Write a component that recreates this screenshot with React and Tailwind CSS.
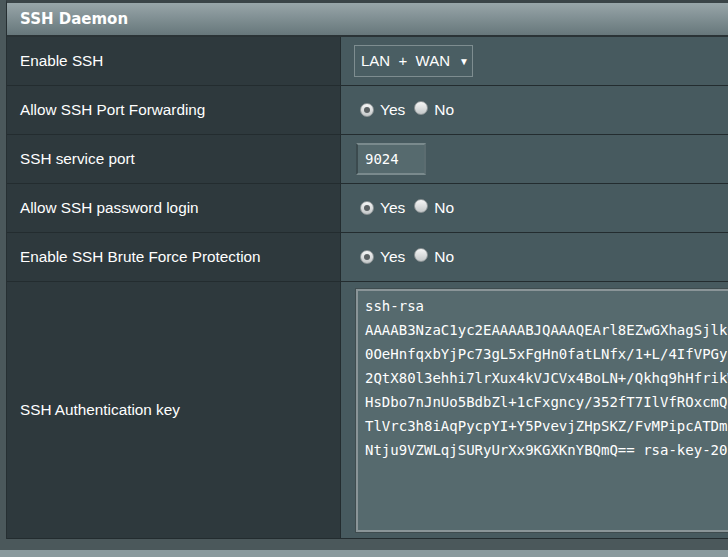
import React from "react"

const keyLines = [
  "ssh-rsa",
  "AAAAB3NzaC1yc2EAAAABJQAAAQEArl8EZwGXhagSjlkQ",
  "0OeHnfqxbYjPc73gL5xFgHn0fatLNfx/1+L/4IfVPGyP",
  "2QtX80l3ehhi7lrXux4kVJCVx4BoLN+/Qkhq9hHfrikW",
  "HsDbo7nJnUo5BdbZl+1cFxgncy/352fT7IlVfROxcmQa",
  "TlVrc3h8iAqPycpYI+Y5PvevjZHpSKZ/FvMPipcATDmF",
  "Ntju9VZWLqjSURyUrXx9KGXKnYBQmQ== rsa-key-2019",
]

function Radio({ checked }) {
  return (
    <span className="relative inline-flex h-[14px] w-[14px] items-center justify-center rounded-full border border-[#8d9496] bg-gradient-to-b from-[#f6f6f6] to-[#c4c8c9]">
      {checked && <span className="h-[6px] w-[6px] rounded-full bg-[#5b6163]" />}
    </span>
  )
}

function YesNo() {
  return (
    <div className="flex items-center pl-[19px] text-[15.5px] text-white">
      <Radio checked />
      <span className="ml-[6px]">Yes</span>
      <span className="ml-[9px]"><Radio /></span>
      <span className="ml-[6px]">No</span>
    </div>
  )
}

function Row({ label, children, tall }) {
  return (
    <div className={`grid grid-cols-[334px_1fr] border-b border-[#232c2f] ${tall ? "h-[257px]" : "h-[49px]"}`}>
      <div className="flex items-center border-r border-[#232c2f] bg-[#2e393d] pl-[13px] text-[15.3px] text-white">
        {label}
      </div>
      <div className="flex items-center bg-[#475a5f]">{children}</div>
    </div>
  )
}

export default function App() {
  return (
    <div className="relative h-[557px] w-[728px] overflow-hidden bg-[#4b585b] font-['Liberation_Sans',Arial,sans-serif]">
      <div className="ml-[6px] w-[800px] border-l border-t-[3px] border-[#3a4447] border-l-[#262f32]">
        <div className="flex h-[34px] items-center border-b-2 border-[#2a3336] bg-gradient-to-b from-[#98a6a9] to-[#67777b] pl-[13px] font-['DejaVu_Sans',Verdana,sans-serif] text-[15px] font-bold text-white">
          SSH Daemon
        </div>

        <Row label="Enable SSH">
          <div className="ml-[13px] flex h-[32px] w-[119px] items-center border border-[#7e8d90] bg-[#4a5e63] pl-[6px] text-[15px] text-white">
            <span className="whitespace-pre">LAN  +  WAN</span>
            <span className="ml-[9px] text-[10px]">▼</span>
          </div>
        </Row>

        <Row label="Allow SSH Port Forwarding">
          <YesNo />
        </Row>

        <Row label="SSH service port">
          <div className="ml-[15px] flex h-[32px] w-[70px] items-center border-2 border-t-[#7a8a8d] border-l-[#3b4a4e] border-b-[#7a8a8d] border-r-[#5b6c70] bg-[#566a6e] pl-[7px] font-['DejaVu_Sans_Mono',monospace] text-[14px] text-white">
            9024
          </div>
        </Row>

        <Row label="Allow SSH password login">
          <YesNo />
        </Row>

        <Row label="Enable SSH Brute Force Protection">
          <YesNo />
        </Row>

        <Row label="SSH Authentication key" tall>
          <div className="ml-[15px] mt-[7px] h-[243px] w-[420px] self-start border-2 border-[#8a9598] bg-[#566a6e] outline outline-1 outline-[#3f4c4f]">
            <div className="pl-[7px] pt-[3px] font-['DejaVu_Sans_Mono',monospace] text-[14px] leading-[24px] text-white">
              {keyLines.map((l) => (
                <div key={l} className="whitespace-pre">{l}</div>
              ))}
            </div>
          </div>
        </Row>
      </div>
      <div className="absolute bottom-0 left-0 h-[7px] w-full bg-[#8a9a9d]" />
    </div>
  )
}
